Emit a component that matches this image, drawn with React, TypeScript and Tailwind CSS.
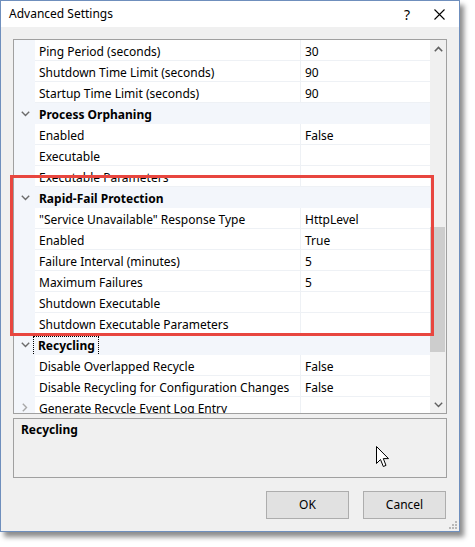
type Row =
  | { kind: "prop"; name: string; value?: string }
  | { kind: "cat"; name: string; focus?: boolean }
  | { kind: "collapsed"; name: string };

const rows: Row[] = [
  { kind: "prop", name: "Ping Period (seconds)", value: "30" },
  { kind: "prop", name: "Shutdown Time Limit (seconds)", value: "90" },
  { kind: "prop", name: "Startup Time Limit (seconds)", value: "90" },
  { kind: "cat", name: "Process Orphaning" },
  { kind: "prop", name: "Enabled", value: "False" },
  { kind: "prop", name: "Executable" },
  { kind: "prop", name: "Executable Parameters" },
  { kind: "cat", name: "Rapid-Fail Protection" },
  { kind: "prop", name: "\"Service Unavailable\" Response Type", value: "HttpLevel" },
  { kind: "prop", name: "Enabled", value: "True" },
  { kind: "prop", name: "Failure Interval (minutes)", value: "5" },
  { kind: "prop", name: "Maximum Failures", value: "5" },
  { kind: "prop", name: "Shutdown Executable" },
  { kind: "prop", name: "Shutdown Executable Parameters" },
  { kind: "cat", name: "Recycling", focus: true },
  { kind: "prop", name: "Disable Overlapped Recycle", value: "False" },
  { kind: "prop", name: "Disable Recycling for Configuration Changes", value: "False" },
  { kind: "collapsed", name: "Generate Recycle Event Log Entry" },
];

function ChevronDown({ color = "#6b6b6b" }: { color?: string }) {
  return (
    <svg width="9" height="6" viewBox="0 0 9 6" fill="none">
      <path d="M0.8 0.8L4.5 4.5L8.2 0.8" stroke={color} strokeWidth="1.4" />
    </svg>
  );
}

function ChevronRight() {
  return (
    <svg width="6" height="9" viewBox="0 0 6 9" fill="none">
      <path d="M0.8 0.8L4.5 4.5L0.8 8.2" stroke="#a8a8a8" strokeWidth="1.4" />
    </svg>
  );
}

function ChevronUp() {
  return (
    <svg width="9" height="6" viewBox="0 0 9 6" fill="none">
      <path d="M0.8 5.2L4.5 1.5L8.2 5.2" stroke="#606060" strokeWidth="1.6" />
    </svg>
  );
}

function GridRow({ row }: { row: Row }) {
  if (row.kind === "cat") {
    return (
      <div className="flex h-[21px] shrink-0 bg-[#f3f6fb]">
        <div className="w-[21px] shrink-0 flex items-center justify-center pl-[1px]">
          <ChevronDown />
        </div>
        <div className="flex items-center pt-[2px]">
          <span
            className={
              row.focus
                ? "font-bold pl-[4px] pr-[3px] h-[18px] leading-[17px] outline outline-1 outline-dotted outline-black -ml-[1px]"
                : "font-bold pl-[4px]"
            }
          >
            {row.name}
          </span>
        </div>
      </div>
    );
  }
  return (
    <div className="flex h-[21px] shrink-0">
      <div className="w-[21px] shrink-0 bg-[#f3f6fb] flex items-center justify-center">
        {row.kind === "collapsed" && <ChevronRight />}
      </div>
      <div className="flex flex-1 bg-white border-b border-[#eef1f5]">
        <div className="w-[266px] shrink-0 pl-[4px] pt-[3px] flex items-center whitespace-nowrap overflow-hidden border-r border-[#eef1f5]">
          {row.name}
        </div>
        <div className="flex-1 pl-[4px] pt-[3px] flex items-center">{row.kind === "prop" ? row.value : ""}</div>
      </div>
    </div>
  );
}

function Cursor() {
  return (
    <svg width="13" height="22" viewBox="0 0 13 22" className="absolute left-[376px] top-[446px]">
      <path
        d="M0.5 0.5V17.5L4.5 13.5L7.3 20.5L10 19.4L7.3 12.6H12.5Z"
        fill="white"
        stroke="black"
        strokeWidth="1"
        strokeLinejoin="miter"
      />
    </svg>
  );
}

export default function App() {
  return (
    <div className="w-[475px] h-[547px] bg-white relative font-['Noto_Sans',sans-serif] text-[12px] text-black">
      <div className="relative w-[460px] h-[532px] bg-[#f0f0f0] border border-[#6f8fbd] shadow-[4px_5px_5px_rgba(0,0,0,0.45)] flex flex-col">
        {/* title bar */}
        <div className="h-[26px] bg-white flex items-center shrink-0">
          <span className="pl-[8px] flex-1">Advanced Settings</span>
          <span className="w-[20px] text-center mr-[17px] text-[14px]">?</span>
          <svg width="11" height="11" viewBox="0 0 11 11" className="mr-[14px]">
            <path d="M0.5 0.5L10.5 10.5M10.5 0.5L0.5 10.5" stroke="#000" strokeWidth="1.1" />
          </svg>
        </div>

        {/* property grid */}
        <div className="ml-[12px] mt-[12px] w-[434px] h-[375px] border border-[#a0a0a0] flex bg-[#f3f6fb]">
          <div className="flex-1 flex flex-col overflow-hidden">
            {rows.map((r, i) => (
              <GridRow key={i} row={r} />
            ))}
          </div>
          <div className="w-[16px] shrink-0 bg-[#f0f0f0] flex flex-col">
            <div className="h-[17px] flex items-center justify-center">
              <ChevronUp />
            </div>
            <div className="flex-1">
              <div className="mt-[170px] h-[125px] w-[15px] bg-[#cdcdcd]" />
            </div>
            <div className="h-[17px] flex items-center justify-center">
              <ChevronDown color="#606060" />
            </div>
          </div>
        </div>

        {/* description */}
        <div className="ml-[12px] mt-[4px] w-[434px] h-[60px] border border-[#a0a0a0] pl-[7px] pt-[2px]">
          <span className="font-bold">Recycling</span>
        </div>

        {/* buttons */}
        <div className="flex justify-end gap-[14px] mr-[13px] mt-[13px]">
          <button className="w-[83px] h-[28px] bg-[#e1e1e1] border border-[#adadad]">OK</button>
          <button className="w-[83px] h-[28px] bg-[#e1e1e1] border border-[#adadad]">Cancel</button>
        </div>

        {/* resize grip */}
        <svg width="8" height="8" viewBox="0 0 8 8" className="absolute right-[2px] bottom-[2px]">
          <rect x="6" y="0" width="2" height="2" fill="#b8b8b8" />
          <rect x="3" y="3" width="2" height="2" fill="#b8b8b8" />
          <rect x="6" y="3" width="2" height="2" fill="#b8b8b8" />
          <rect x="0" y="6" width="2" height="2" fill="#b8b8b8" />
          <rect x="3" y="6" width="2" height="2" fill="#b8b8b8" />
          <rect x="6" y="6" width="2" height="2" fill="#b8b8b8" />
        </svg>
      </div>

      {/* highlight */}
      <div className="absolute left-[10px] top-[175px] w-[424px] h-[161px] border-[3px] border-[#e8463f]" />
      <Cursor />
    </div>
  );
}
